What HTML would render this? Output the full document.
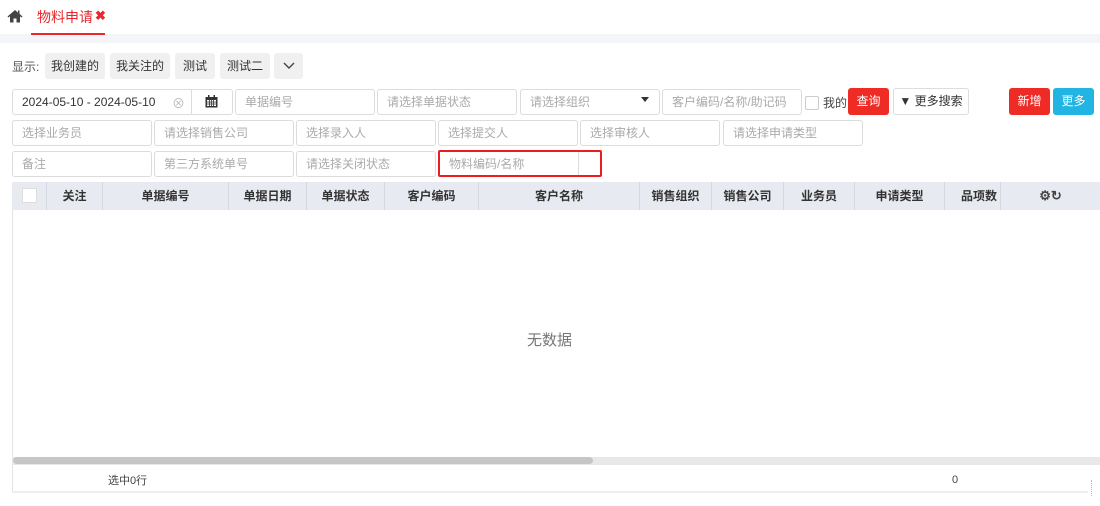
<!DOCTYPE html><html><head><meta charset="utf-8"><style>
*{box-sizing:border-box;margin:0;padding:0}
body{width:1100px;height:506px;background:#fff;font-family:"Liberation Sans","Noto Sans CJK SC",sans-serif;font-size:12px;color:#333;position:relative;overflow:hidden}
.a{position:absolute}
.in{position:absolute;height:26px;border:1px solid #dcdcdc;border-radius:3px;color:#aaa;padding-left:9px;line-height:24px;font-size:12px;background:#fff}
.btn{position:absolute;height:26px;background:#f0f0f0;border-radius:3px;line-height:26px;text-align:center;color:#333;font-size:12px}
.th{position:absolute;top:182px;height:28px;line-height:28px;text-align:center;font-weight:bold;font-size:12px;color:#333;border-right:1px solid #d5d8e0}
</style></head><body>
<div class="a" style="left:0;top:34px;width:1100px;height:9px;background:#f3f5f9"></div>
<svg class="a" style="left:7px;top:9px" width="16" height="14" viewBox="0 0 16 14"><path d="M8 1L0.5 7.5 1.5 8.5 3 7.2V13.5H6.5V9.5H9.5V13.5H13V7.2L14.5 8.5 15.5 7.5 12.5 4.9V1.5H11V3.6Z" fill="#444"/></svg>
<div class="a" style="left:37px;top:7px;font-size:14px;color:#e8262c">物料申请</div>
<div class="a" style="left:95px;top:8px;font-size:13px;color:#e8262c;font-weight:bold">✖</div>
<div class="a" style="left:31px;top:33px;width:74px;height:2px;background:#f0242a"></div>
<div class="a" style="left:12px;top:58px;color:#555">显示:</div>
<div class="btn" style="left:45px;top:53px;width:60px">我创建的</div>
<div class="btn" style="left:110px;top:53px;width:60px">我关注的</div>
<div class="btn" style="left:175px;top:53px;width:40px">测试</div>
<div class="btn" style="left:220px;top:53px;width:50px">测试二</div>
<div class="btn" style="left:274px;top:53px;width:29px"><svg width="12" height="8" viewBox="0 0 12 8" style="margin-top:9px"><path d="M1 1L6 6 11 1" stroke="#444" stroke-width="1.4" fill="none"/></svg></div>
<div class="in" style="left:12px;top:89px;width:221px;color:#333">2024-05-10 - 2024-05-10</div>
<div class="a" style="left:172px;top:93px;color:#bbb;font-size:13px">⊗</div>
<div class="a" style="left:191px;top:89px;width:1px;height:26px;background:#dcdcdc"></div>
<svg class="a" style="left:205px;top:95px" width="13" height="13" viewBox="0 0 13 13"><rect x="0.5" y="2" width="12" height="10.5" fill="#333"/><rect x="2" y="5" width="9" height="6" fill="#fff"/><path d="M2 7H11M2 9H11M4.5 5V11M6.5 5V11M8.5 5V11" stroke="#333" stroke-width=".8"/><rect x="3" y="0" width="1.5" height="3" fill="#333"/><rect x="8.5" y="0" width="1.5" height="3" fill="#333"/></svg>
<div class="in" style="left:235px;top:89px;width:140px">单据编号</div>
<div class="in" style="left:377px;top:89px;width:140px">请选择单据状态</div>
<div class="in" style="left:520px;top:89px;width:140px">请选择组织</div>
<div class="a" style="left:641px;top:97px;width:0;height:0;border-left:4px solid transparent;border-right:4px solid transparent;border-top:5px solid #333"></div>
<div class="in" style="left:662px;top:89px;width:140px">客户编码/名称/助记码</div>
<div class="a" style="left:805px;top:96px;width:14px;height:14px;border:1px solid #ccc;border-radius:2px"></div>
<div class="a" style="left:823px;top:94px;color:#444">我的</div>
<div class="a" style="left:848px;top:88px;width:41px;height:27px;background:#ee2b25;border-radius:3px;color:#fff;text-align:center;line-height:27px">查询</div>
<div class="a" style="left:893px;top:88px;width:76px;height:27px;border:1px solid #ddd;border-radius:3px;color:#333;text-align:center;line-height:25px">▼ 更多搜索</div>
<div class="a" style="left:1009px;top:88px;width:41px;height:27px;background:#ee2b25;border-radius:3px;color:#fff;text-align:center;line-height:27px">新增</div>
<div class="a" style="left:1053px;top:88px;width:41px;height:27px;background:#22b5e3;border-radius:3px;color:#fff;text-align:center;line-height:27px">更多</div>
<div class="in" style="left:12px;top:120px;width:140px">选择业务员</div>
<div class="in" style="left:154px;top:120px;width:140px">请选择销售公司</div>
<div class="in" style="left:296px;top:120px;width:140px">选择录入人</div>
<div class="in" style="left:438px;top:120px;width:140px">选择提交人</div>
<div class="in" style="left:580px;top:120px;width:140px">选择审核人</div>
<div class="in" style="left:723px;top:120px;width:140px">请选择申请类型</div>
<div class="in" style="left:12px;top:151px;width:140px">备注</div>
<div class="in" style="left:154px;top:151px;width:140px">第三方系统单号</div>
<div class="in" style="left:296px;top:151px;width:140px">请选择关闭状态</div>
<div class="in" style="left:438px;top:150px;width:164px;height:27px;border:2px solid #ee1c1c;border-radius:2px">物料编码/名称</div>
<div class="a" style="left:578px;top:152px;width:1px;height:23px;background:#ddd"></div>
<div class="a" style="left:12px;top:182px;width:1088px;height:28px;background:#e8eaf1"></div>
<div class="th" style="left:12px;width:35px"><div style="width:15px;height:15px;background:#fff;border:1px solid #ddd;margin:6px auto"></div></div>
<div class="th" style="left:47px;width:56px">关注</div>
<div class="th" style="left:103px;width:126px">单据编号</div>
<div class="th" style="left:229px;width:78px">单据日期</div>
<div class="th" style="left:307px;width:78px">单据状态</div>
<div class="th" style="left:385px;width:94px">客户编码</div>
<div class="th" style="left:479px;width:161px">客户名称</div>
<div class="th" style="left:640px;width:72px">销售组织</div>
<div class="th" style="left:712px;width:72px">销售公司</div>
<div class="th" style="left:784px;width:71px">业务员</div>
<div class="th" style="left:855px;width:90px">申请类型</div>
<div class="th" style="left:945px;width:56px;text-align:right;padding-right:3px">品项数</div>
<div class="th" style="left:1001px;width:99px;border:none;color:#444;font-size:13px">⚙↻</div>
<div class="a" style="left:12px;top:210px;width:1px;height:282px;background:#e4e4e4"></div>
<div class="a" style="left:527px;top:329px;font-size:15px;color:#777">无数据</div>
<div class="a" style="left:12px;top:457px;width:1088px;height:8px;background:#e8e8e8"></div>
<div class="a" style="left:13px;top:457px;width:580px;height:7px;background:#c6c6c6;border-radius:4px"></div>
<div class="a" style="left:108px;top:472px;font-size:11px;color:#444">选中0行</div>
<div class="a" style="left:952px;top:474px;font-size:11px;color:#444">0</div>
<div class="a" style="left:12px;top:491px;width:1076px;height:2px;background:#eee"></div>
<div class="a" style="left:1091px;top:480px;width:1px;height:16px;border-left:1px dotted #bbb"></div>
</body></html>
